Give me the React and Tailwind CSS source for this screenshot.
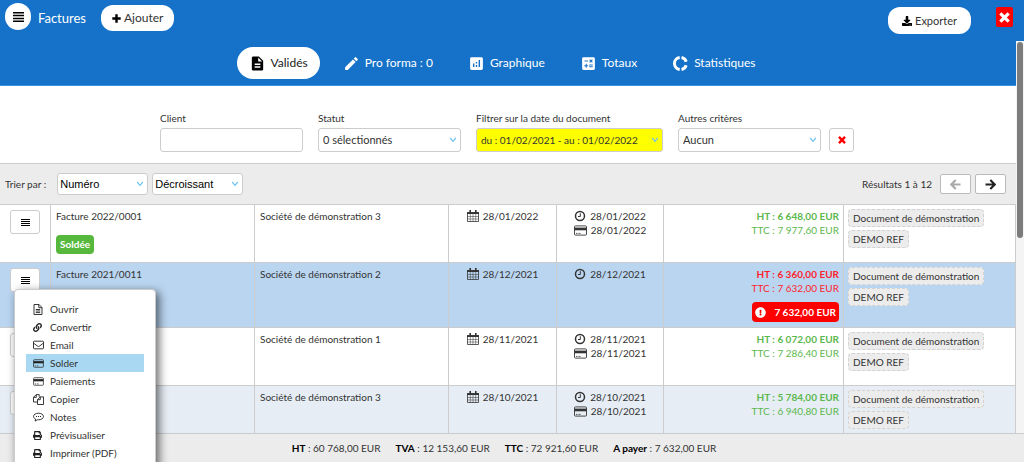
import { FaDownload, FaLink, FaPrint, FaExclamationCircle } from 'react-icons/fa'
import { MdDescription, MdEdit, MdAnalytics, MdCalculate } from 'react-icons/md'

// small icons
function LinesIcon({ className = 'h-[7px] w-[9px]' }) {
    return (
        <svg viewBox="0 0 9 7" preserveAspectRatio="none" className={`shrink-0 ${className}`} fill="currentColor">
            <path d="M0 0h9v1H0zM0 2h9v1H0zM0 4h9v1H0zM0 6h9v1H0z" />
        </svg>
    )
}

function RingIcon({ className }) {
    return (
        <svg viewBox="0 0 17 17" className={`h-[17px] w-[17px] shrink-0 ${className}`} fill="none" stroke="currentColor" strokeWidth="3">
            <path d="M7.700 2.550a6 6 0 0 0 0 11.900M9.500 14.400a6 6 0 0 0 4.700-4.200M14.200 6.800a6 6 0 0 0-4.700-4.200" />
        </svg>
    )
}

function CrossIcon({ className }) {
    return (
        <svg viewBox="0 0 10 10" className={`shrink-0 ${className}`} fill="none" stroke="currentColor" strokeWidth="3">
            <path d="M1.200 1.200l7.600 7.600M8.800 1.200L1.200 8.800" />
        </svg>
    )
}

function PlusIcon() {
    return (
        <svg viewBox="0 0 9 9" className="h-[9px] w-[9px] shrink-0 text-black" fill="none" stroke="currentColor" strokeWidth="2.400">
            <path d="M4.500.3v8.400M.3 4.500h8.400" />
        </svg>
    )
}

function ArrowIcon({ className = '' }) {
    return (
        <svg viewBox="0 0 11 11" className={`h-[11px] w-[11px] shrink-0 ${className}`} fill="none" stroke="currentColor" strokeWidth="2.200">
            <path d="M.5 5.500h9M5.300 1l4.500 4.500L5.300 10" />
        </svg>
    )
}

function CalendarIcon() {
    return (
        <svg viewBox="0 0 12 12" className="h-3 w-3 shrink-0" fill="none" stroke="currentColor">
            <path d="M.5 2.500h11v9H.5z" strokeWidth=".8" />
            <path d="M0 2.200h12v1.800H0z" fill="currentColor" stroke="none" />
            <path d="M3.200 0v3M8.800 0v3" strokeWidth="1.600" />
            <path d="M.5 6.500h11M.5 9h11M3.300 4v7.500M6 4v7.500M8.700 4v7.500" strokeWidth=".5" />
        </svg>
    )
}

function ClockIcon() {
    return (
        <svg viewBox="0 0 12 12" className="h-3 w-3 shrink-0" fill="none" stroke="currentColor">
            <circle cx="6" cy="6" r="4.500" strokeWidth="1.500" />
            <path d="M6.300 3.200v3.300H4" />
        </svg>
    )
}

function CardIcon({ className = 'h-[11px] w-[13px]' }) {
    return (
        <svg viewBox="0 0 13 11" className={`shrink-0 ${className}`} fill="none" stroke="currentColor">
            <rect x=".5" y=".9" width="12" height="9.200" rx="1" strokeWidth=".9" />
            <path d="M.5 2.600h12v2.700H.5z" fill="currentColor" stroke="none" />
            <path d="M2 8.400h1.600M4.500 8.400h2" strokeWidth=".8" />
        </svg>
    )
}

function FileIcon() {
    return (
        <svg viewBox="0 0 10 11" className="h-[11px] w-[10px]" fill="none" stroke="currentColor" strokeWidth=".9">
            <path d="M1 .5h5L9 3.500V10.500H1zM5.800.5v3.200H9M2.800 5.500h4.400M2.800 7h4.400M2.800 8.600h4.400" />
        </svg>
    )
}

function MailIcon() {
    return (
        <svg viewBox="0 0 11 10" className="h-[10px] w-[11px]" fill="none" stroke="currentColor" strokeWidth=".9">
            <rect x=".5" y="1.200" width="10" height="7.600" rx=".8" />
            <path d="M.6 3.200 4.700 6.200q.8.5 1.600 0L10.400 3.200" />
        </svg>
    )
}

function CopyIcon() {
    return (
        <svg viewBox="0 0 11 11" className="h-[11px] w-[11px]" fill="none" stroke="currentColor" strokeWidth=".9">
            <path d="M4.500 8H.5V3.300L3.200.6h3v2.200M3.300.6v2.800H.5" />
            <path d="M4.500 5.600 7.300 2.900h3.200v7.600h-6zM7.300 2.900v2.800H4.500" />
        </svg>
    )
}

function NoteIcon() {
    return (
        <svg viewBox="0 0 11 10" className="h-[10px] w-[11px]" fill="none" stroke="currentColor" strokeWidth=".9">
            <path d="M5.500 1.200c2.800 0 5 1.500 5 3.300s-2.200 3.300-5 3.300l-1.100-.1L2 9.100l.6-2C1.300 6.500.5 5.500.5 4.500c0-1.800 2.200-3.300 5-3.300z" />
            <path d="M3 4.500h1M5 4.500h1M7 4.500h1" strokeWidth="1.100" />
        </svg>
    )
}

const tabs = [
    { label: 'Validés', icon: MdDescription, active: true },
    { label: 'Pro forma : 0', icon: MdEdit },
    { label: 'Graphique', icon: MdAnalytics },
    { label: 'Totaux', icon: MdCalculate },
    { label: 'Statistiques', icon: RingIcon },
]

const invoices = [
    { number: '2022/0001', client: 'Société de démonstration 3', date: '28/01/2022', due: '28/01/2022', paid: '28/01/2022', ht: '6 648,00', ttc: '7 977,60', settled: true, badge: true },
    { number: '2021/0011', client: 'Société de démonstration 2', date: '28/12/2021', due: '28/12/2021', ht: '6 360,00', ttc: '7 632,00', unpaid: '7 632,00' },
    { number: '', client: 'Société de démonstration 1', date: '28/11/2021', due: '28/11/2021', paid: '28/11/2021', ht: '6 072,00', ttc: '7 286,40', settled: true },
    { number: '', client: 'Société de démonstration 3', date: '28/10/2021', due: '28/10/2021', paid: '28/10/2021', ht: '5 784,00', ttc: '6 940,80', settled: true },
]

const totals = [
    ['HT', '60 768,00 EUR'],
    ['TVA', '12 153,60 EUR'],
    ['TTC', '72 921,60 EUR'],
    ['A payer', '7 632,00 EUR'],
]

const menuItems = [
    { label: 'Ouvrir', icon: <FileIcon /> },
    { label: 'Convertir', icon: <FaLink size={9} /> },
    { label: 'Email', icon: <MailIcon /> },
    { label: 'Solder', icon: <CardIcon className="h-[9px] w-[11px]" />, active: true },
    { label: 'Paiements', icon: <CardIcon className="h-[9px] w-[11px]" /> },
    { label: 'Copier', icon: <CopyIcon /> },
    { label: 'Notes', icon: <NoteIcon /> },
    { label: 'Prévisualiser', icon: <FaPrint size={9} /> },
    { label: 'Imprimer (PDF)', icon: <FaPrint size={9} /> },
]

function SelectBox({ value, className, ...rest }) {
    return (
        <div className="relative">
            <select className={`block w-full appearance-none rounded-[3px] border border-[#ccc] ${className}`} {...rest}>
                <option>{value}</option>
            </select>
            <svg viewBox="0 0 8 6" className="pointer-events-none absolute top-1/2 right-1 h-[6px] w-2 -translate-y-1/2" fill="none" stroke="#6cc4ee" strokeWidth="1.200">
                <path d="M1.200 1 4 4.300 6.800 1" />
            </svg>
        </div>
    )
}

function InvoiceRow({ invoice, className }) {
    const color = invoice.settled ? 'text-[#5cb84c]' : 'text-[#ff1f2d]'
    return (
        <tr className={`h-[58px] align-top ${className}`}>
            <td className="border-r border-b border-[#ccc] pt-[5px] pl-[10px]">
                <button aria-label="Actions" className="flex h-6 w-[30px] items-center justify-center rounded-[3px] border border-[#ccc] bg-white text-black">
                    <LinesIcon />
                </button>
            </td>
            <td className="border-r border-b border-[#ccc] px-[5px] pt-1">
                {invoice.number && <p>Facture {invoice.number}</p>}
                {invoice.badge && (
                    <span className="mt-3 inline-block rounded-[4px] bg-[#56b93e] px-1 leading-[19px] font-bold text-white">Soldée</span>
                )}
            </td>
            <td className="border-r border-b border-[#ccc] px-[5px] pt-1">{invoice.client}</td>
            <td className="border-r border-b border-[#ccc] pt-1">
                <p className="flex items-center justify-center gap-1"><CalendarIcon />{invoice.date}</p>
            </td>
            <td className="border-r border-b border-[#ccc] pt-1">
                <p className="flex items-center justify-center gap-1"><ClockIcon />{invoice.due}</p>
                {invoice.paid && (
                    <p className="flex items-center justify-center gap-1"><CardIcon />{invoice.paid}</p>
                )}
            </td>
            <td className={`border-r border-b border-[#ccc] pt-1 pr-1 text-right ${color}`}>
                <p className="font-bold">HT : {invoice.ht} EUR</p>
                <p>TTC : {invoice.ttc} EUR</p>
                {invoice.unpaid && (
                    <p className="mt-[7px] mb-[5px] ml-auto flex h-5 w-fit items-center gap-2 rounded-[4px] bg-[#ff0000] px-[3px] font-bold text-white">
                        <FaExclamationCircle size={11} />
                        {invoice.unpaid} EUR
                    </p>
                )}
            </td>
            <td className="border-r border-b border-[#ccc] pt-1 pl-1">
                <div className="flex flex-col items-start gap-[3px]">
                    <span className="rounded-[4px] border border-dashed border-[#d2d2d2] bg-[#ececec] px-1 leading-4">Document de démonstration</span>
                    <span className="rounded-[4px] border border-dashed border-[#d2d2d2] bg-[#ececec] px-1 leading-4">DEMO REF</span>
                </div>
            </td>
        </tr>
    )
}

export default function App() {
    return (
        <div className="relative flex h-screen flex-col overflow-hidden bg-white font-['Lato',sans-serif] text-[10px] leading-[14px] text-[#333]">
            <header className="flex h-[41px] shrink-0 items-start bg-[#1572c8]">
                <button aria-label="Menu" className="mt-[3px] ml-[5px] flex h-[27px] w-[26px] items-center justify-center rounded-full bg-white text-black">
                    <LinesIcon className="h-[10px] w-[11px]" />
                </button>
                <h1 className="mt-[10px] ml-[7px] text-[13px] leading-4 text-white">Factures</h1>
                <button className="mt-[5px] ml-[15px] flex h-[26px] items-center gap-[3px] rounded-xl bg-white px-[11px] text-xs">
                    <PlusIcon />
                    Ajouter
                </button>
                <button className="mt-[7px] mr-[25px] ml-auto flex h-[27px] items-center gap-[3px] rounded-xl bg-white px-[14px] text-[11px]">
                    <FaDownload size={10} className="text-black" />
                    Exporter
                </button>
                <button aria-label="Fermer" className="mt-[7px] mr-[11px] flex h-5 w-[17px] items-center justify-center rounded-[2px] bg-[#ff0000] text-white">
                    <CrossIcon className="h-[11px] w-[11px]" />
                </button>
            </header>

            <div className="flex min-h-0 flex-1">
                <main className="min-w-0 flex-1 overflow-hidden">
                    <nav className="flex h-[45px] items-center justify-center gap-[11px] border-b border-[#3d90dc] bg-[#1572c8] pr-3 text-xs text-white">
                        {tabs.map(({ label, icon: Icon, active }) => (
                            <a key={label} href="#" className={`flex h-8 items-center gap-[5px] rounded-full px-3 ${active ? 'bg-white text-[#222]' : ''}`}>
                                <Icon size={17} className={active ? 'text-black' : ''} />
                                {label}
                            </a>
                        ))}
                    </nav>

                    <form className="flex h-[77px] items-end justify-center gap-[15px] pr-[2px] pb-[11px]">
                        <div className="w-[143px]">
                            <label htmlFor="client" className="mb-[3px] block">Client</label>
                            <input id="client" type="text" className="block h-6 w-full rounded-[3px] border border-[#ccc] bg-white px-1" />
                        </div>
                        <div className="w-[143px]">
                            <label htmlFor="statut" className="mb-[3px] block">Statut</label>
                            <SelectBox id="statut" value="0 sélectionnés" className="h-6 bg-white pl-1 text-[11px]" />
                        </div>
                        <div className="w-[187px]">
                            <label htmlFor="periode" className="mb-[3px] block">Filtrer sur la date du document</label>
                            <SelectBox id="periode" value="du : 01/02/2021 - au : 01/02/2022" className="h-6 bg-[#ffff00] pl-1" />
                        </div>
                        <div className="flex items-end gap-2">
                            <div className="w-[143px]">
                                <label htmlFor="criteres" className="mb-[3px] block">Autres critères</label>
                                <SelectBox id="criteres" value="Aucun" className="h-6 bg-white pl-1 text-[11px]" />
                            </div>
                            <button type="button" aria-label="Effacer les filtres" className="flex h-6 w-[25px] items-center justify-center rounded-[3px] border border-[#ccc] bg-white text-[#ff0000]">
                                <CrossIcon className="h-2 w-2" />
                            </button>
                        </div>
                    </form>

                    <div className="flex h-[42px] items-center gap-1 border-y border-[#ccc] bg-[#ececec] pr-[10px] pl-[5px]">
                        <label htmlFor="tri" className="mr-[7px]">Trier par :</label>
                        <div className="w-[91px]">
                            <SelectBox id="tri" value="Numéro" className="h-[22px] bg-white pl-[2px] font-['Liberation_Sans',sans-serif] text-[11px] text-black" />
                        </div>
                        <div className="w-[91px]">
                            <SelectBox aria-label="Ordre" value="Décroissant" className="h-[22px] bg-white pl-[2px] font-['Liberation_Sans',sans-serif] text-[11px] text-black" />
                        </div>
                        <span className="mr-1 ml-auto">Résultats 1 à 12</span>
                        <button aria-label="Page précédente" className="flex h-5 w-[31px] items-center justify-center rounded-[2px] border border-[#bbb] bg-white text-[#aaa]">
                            <ArrowIcon className="rotate-180" />
                        </button>
                        <button aria-label="Page suivante" className="flex h-5 w-[31px] items-center justify-center rounded-[2px] border border-[#bbb] bg-white text-[#222]">
                            <ArrowIcon />
                        </button>
                    </div>

                    <table className="w-full table-fixed border-separate border-spacing-0">
                        <colgroup>
                            <col className="w-[51px]" />
                            <col />
                            <col className="w-[194px]" />
                            <col className="w-[108px]" />
                            <col className="w-[107px]" />
                            <col className="w-[180px]" />
                            <col className="w-[172px]" />
                        </colgroup>
                        <tbody>
                            {invoices.map((invoice, i) => (
                                <InvoiceRow
                                    key={invoice.date}
                                    invoice={invoice}
                                    className={invoice.unpaid ? 'bg-[#bad5f0]' : i % 2 ? 'bg-[#e6edf5]' : 'bg-white'}
                                />
                            ))}
                        </tbody>
                    </table>
                </main>
                <div className="w-2 shrink-0 bg-[#f4f4f4] px-px pt-px">
                    <div className="h-1/2 rounded-full bg-[#7c7c7c]" />
                </div>
            </div>

            <footer className="flex h-[29px] shrink-0 items-center justify-center gap-[15px] border-t border-[#ccc] bg-[#ececec] pr-4">
                {totals.map(([label, value]) => (
                    <span key={label}><b className="text-black">{label}</b> : {value}</span>
                ))}
            </footer>

            {/* row actions menu */}
            <ul className="absolute top-[289px] left-[14px] w-[142px] rounded-[4px] border border-[#ccc] bg-white px-[11px] py-[10px] shadow-[3px_3px_10px_rgba(0,0,0,0.6)]">
                {menuItems.map(({ label, icon, active }) => (
                    <li key={label}>
                        <button className={`flex h-[18px] w-full items-center gap-[5px] pl-[7px] ${active ? 'bg-[#a9d8f2]' : ''}`}>
                            <span className="flex w-3 items-center text-[#222]">{icon}</span>
                            {label}
                        </button>
                    </li>
                ))}
            </ul>
        </div>
    )
}
